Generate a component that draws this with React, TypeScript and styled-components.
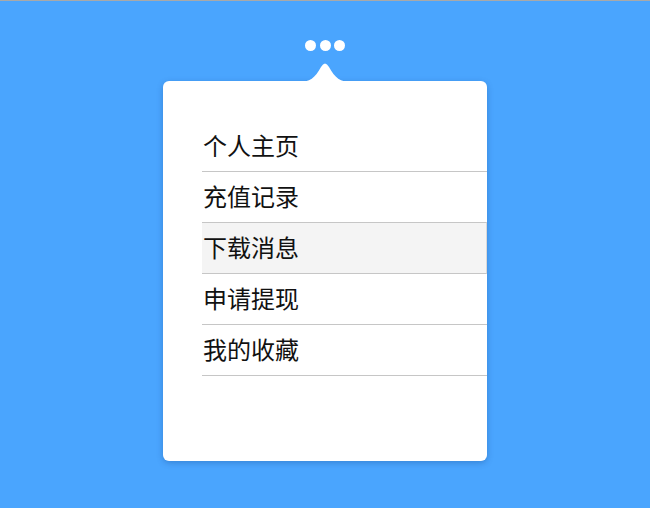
import React from "react";
import styled, { createGlobalStyle } from "styled-components";

const Global = createGlobalStyle`
  html, body { margin: 0; padding: 0; }
  body { font-family: "Noto Sans CJK SC", "Noto Sans", sans-serif; }
`;

const Page = styled.div`
  min-height: 100vh;
  box-sizing: border-box;
  background: #4aa5fe;
  border-top: 1px solid #a9a9a9;
  display: flex;
  flex-direction: column;
  align-items: center;
  padding-top: 39px;
`;

const Dots = styled.div`
  display: flex;
  gap: 3.5px;
  height: 11px;
`;

const Dot = styled.span`
  width: 11px;
  height: 11px;
  border-radius: 50%;
  background: #fff;
`;

const Arrow = styled.svg`
  display: block;
  margin-top: 10px;
  margin-bottom: -1px;
  position: relative;
  z-index: 1;
`;

const Card = styled.div`
  width: 324px;
  height: 380px;
  box-sizing: border-box;
  background: #fff;
  border-radius: 6px;
  box-shadow: 0 2px 6px rgba(0, 40, 100, 0.25);
  padding: 40px 0 0 39px;
`;

const List = styled.ul`
  list-style: none;
  margin: 0;
  padding: 0;
`;

const Item = styled.li<{ $active?: boolean }>`
  height: 50px;
  box-sizing: border-box;
  display: flex;
  align-items: center;
  border-bottom: 1px solid #c6c6c6;
  border-top: ${(p) => (p.$active ? "1px solid #c6c6c6" : "none")};
  margin-top: ${(p) => (p.$active ? "-1px" : "0")};
  height: ${(p) => (p.$active ? "52px" : "51px")};
  border-right: ${(p) => (p.$active ? "1px solid #d8d8d8" : "none")};
  background: ${(p) => (p.$active ? "#f4f4f4" : "transparent")};
  font-size: 24px;
  color: #111;
  padding: 0 0 3px 1px;
`;

const items = ["个人主页", "充值记录", "下载消息", "申请提现", "我的收藏"];

export default function App() {
  return (
    <>
      <Global />
      <Page>
        <Dots>
          <Dot />
          <Dot />
          <Dot />
        </Dots>
        <Arrow width="54" height="21" viewBox="0 0 54 21">
          <path
            d="M0 21 C12 21 17 17 23 6 Q27 -1 31 6 C37 17 42 21 54 21 Z"
            fill="#fff"
          />
        </Arrow>
        <Card>
          <List>
            {items.map((t, i) => (
              <Item key={t} $active={i === 2}>
                {t}
              </Item>
            ))}
          </List>
        </Card>
      </Page>
    </>
  );
}
